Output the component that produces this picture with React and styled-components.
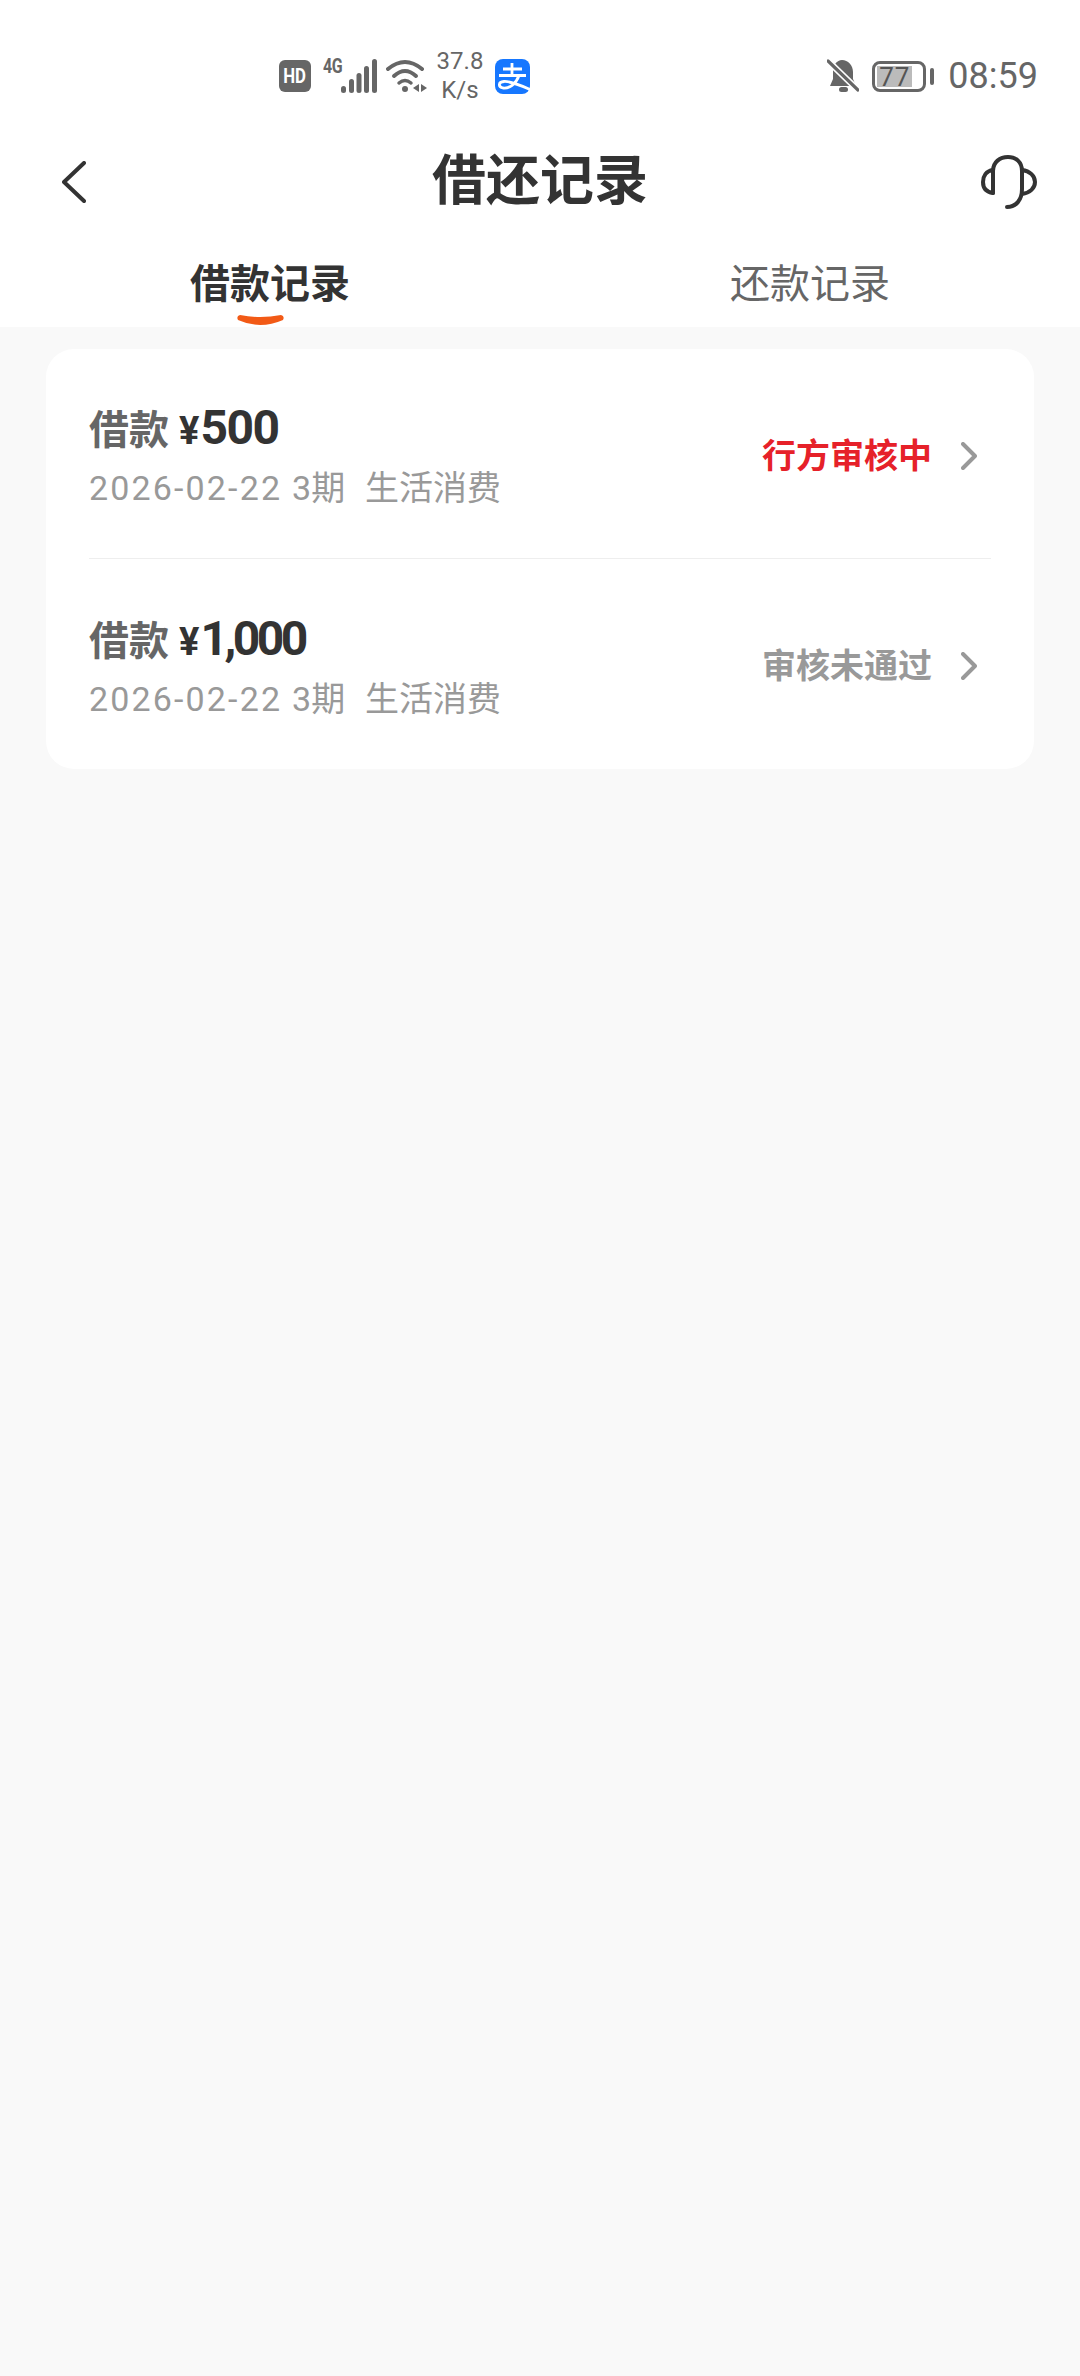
import React from 'react';
import styled, { createGlobalStyle } from 'styled-components';

const GlobalStyle = createGlobalStyle`
  html, body {
    margin: 0;
    padding: 0;
    background: #f9f9f9;
  }
  body {
    font-family: Roboto, "Noto Sans CJK SC", sans-serif;
  }
`;

const Page = styled.div`
  width: 1080px;
  height: 2376px;
  display: flex;
  flex-direction: column;
  overflow: hidden;
`;

const Header = styled.header`
  background: #fff;
`;

const StatusBar = styled.div`
  height: 152px;
  box-sizing: border-box;
  padding: 0 42px 0 279px;
  display: flex;
  align-items: center;
  justify-content: space-between;
  color: #666;
`;

const StatusGroup = styled.div`
  display: flex;
  align-items: center;
`;

const HdBadge = styled.div`
  width: 32px;
  height: 32px;
  border-radius: 6px;
  background: #666;
  color: #fff;
  font-size: 20px;
  font-weight: 700;
  display: flex;
  align-items: center;
  justify-content: center;
  span {
    display: block;
    transform: scaleX(0.84);
  }
`;

const SignalWrap = styled.div`
  margin-left: 12px;
  display: flex;
  align-items: flex-start;
  height: 34px;
`;

const NetType = styled.span`
  display: block;
  width: 18px;
  font-size: 20px;
  line-height: 15px;
  font-weight: 700;
  letter-spacing: -0.5px;
  transform: scaleX(0.8);
  transform-origin: left top;
`;

const Speed = styled.div`
  margin-left: 9px;
  width: 46px;
  text-align: center;
  font-size: 24px;
  line-height: 29px;
  white-space: nowrap;
  display: flex;
  flex-direction: column;
  align-items: center;
`;

const Battery = styled.div`
  margin-left: 13px;
  width: 54px;
  height: 31px;
  box-sizing: border-box;
  border: 3px solid #666;
  border-radius: 8px;
  padding: 2px;
  display: flex;
`;

const BatteryFill = styled.div`
  width: 35px;
  background: #bbb;
  font-size: 26px;
  line-height: 22px;
  color: #555;
  text-align: center;
  letter-spacing: 1px;
`;

const BatteryNub = styled.div`
  margin-left: 4px;
  width: 4px;
  height: 17px;
  border-radius: 2px;
  background: #666;
`;

const Clock = styled.div`
  margin-left: 14px;
  font-size: 36px;
  line-height: 40px;
`;

const NavBar = styled.div`
  height: 60px;
  padding: 0 43px;
  display: grid;
  grid-template-columns: 1fr auto 1fr;
  align-items: center;
`;

const NavLeft = styled.div`
  padding-left: 19px;
  display: flex;
`;

const NavTitle = styled.h1`
  margin: 0;
  font-size: 54px;
  line-height: 60px;
  font-weight: 700;
  color: #333;
`;

const NavRight = styled.div`
  display: flex;
  justify-content: flex-end;
`;

const Tabs = styled.div`
  height: 115px;
  display: flex;
`;

const Tab = styled.div`
  position: relative;
  flex: 1;
  padding-top: 49px;
  text-align: center;
  font-size: 40px;
  line-height: 48px;
  font-weight: ${(p) => (p.$active ? 700 : 400)};
  color: ${(p) => (p.$active ? '#333' : '#666')};
`;

const TabMark = styled.svg`
  position: absolute;
  left: 237px;
  bottom: 0;
  display: block;
`;

const Main = styled.main`
  flex: 1;
  background: #f9f9f9;
  padding: 22px 46px;
`;

const Card = styled.section`
  background: #fff;
  border-radius: 28px;
  padding: 0 43px;
`;

const Row = styled.div`
  height: 210px;
  box-sizing: border-box;
  padding-right: 14px;
  display: flex;
  align-items: center;
  justify-content: space-between;
  border-bottom: ${(p) => (p.$last ? 'none' : '1px solid #eeeeee')};
`;

const RowText = styled.div`
  padding-top: 3px;
  display: flex;
  flex-direction: column;
`;

const AmountLine = styled.div`
  display: flex;
  align-items: baseline;
  line-height: 56px;
  height: 56px;
`;

const AmountLabel = styled.span`
  font-size: 40px;
  font-weight: 700;
  color: #666;
`;

const Yen = styled.span`
  margin-left: 10px;
  font-size: 38px;
  font-weight: 700;
  color: #333;
`;

const Amount = styled.span`
  margin-left: 1px;
  font-size: 48px;
  font-weight: 700;
  letter-spacing: ${(p) => (p.$tight ? '-3.5px' : '-1.5px')};
  color: #333;
`;

const Meta = styled.div`
  margin-top: 10px;
  font-size: 34px;
  line-height: 44px;
  color: #999;
  white-space: pre;
  word-spacing: 1.5px;
`;

const MetaDate = styled.span`
  letter-spacing: 2.15px;
`;

const RowStatus = styled.div`
  padding-top: 4px;
  display: flex;
  align-items: center;
  gap: 29px;
`;

const StatusText = styled.span`
  font-size: 34px;
  line-height: 44px;
  font-weight: 700;
  color: ${(p) => (p.$alert ? '#e62129' : '#999')};
`;

const WifiIcon = () => (
  <svg width="42" height="36" viewBox="0 0 42 36" style={{ marginLeft: 9 }} fill="none" stroke="#666" strokeWidth="4" strokeLinecap="round">
    <path d="M2 11Q19 -3 36 11" />
    <path d="M8 18Q19 8 30 18" />
    <path d="M13 25Q19 20 25 25" strokeWidth="3.5" />
    <circle cx="19" cy="31" r="3" fill="#666" stroke="none" />
    <path d="M33 26V34L27 30Z M35 26V34L41 30Z" fill="#666" stroke="none" />
  </svg>
);

const SignalBars = () => (
  <svg width="36" height="34" viewBox="0 0 36 34" fill="#666">
    <rect x="0" y="27" width="5" height="7" rx="2.5" />
    <rect x="8" y="20" width="5" height="14" rx="2.5" />
    <rect x="15.5" y="14" width="5" height="20" rx="2.5" />
    <rect x="23" y="7" width="5" height="27" rx="2.5" />
    <rect x="31" y="0" width="5" height="34" rx="2.5" />
  </svg>
);

const AlipayIcon = () => (
  <svg width="35" height="35" viewBox="0 0 35 35" style={{ marginLeft: 12 }}>
    <rect width="35" height="35" rx="8" fill="#1677ff" />
    <path
      d="M8 10H27M17 4V16M4 16.5H31M24 16.5C21 25 14 30 8 29C3 28 3 23 9 22.5C16 22 27 27 35 30.5"
      fill="none"
      stroke="#fff"
      strokeWidth="2.8"
    />
  </svg>
);

const BellOffIcon = () => (
  <svg width="32" height="34" viewBox="0 0 32 34">
    <path d="M15 1C21 1 26 6 26 13V20L29 27H3L6 20V12C6 6 10 1 15 1Z" fill="#666" />
    <rect x="12" y="28" width="9" height="5" rx="2.5" fill="#666" />
    <path d="M1 2L31 31" stroke="#fff" strokeWidth="6.5" />
    <path d="M1 2L31 31" stroke="#666" strokeWidth="3.2" strokeLinecap="round" />
  </svg>
);

const BackIcon = () => (
  <svg width="24" height="42" viewBox="0 0 24 42" fill="none" stroke="#333" strokeWidth="4" strokeLinecap="round" strokeLinejoin="round">
    <path d="M22 2L2 21L22 40" />
  </svg>
);

const HeadsetIcon = () => (
  <svg width="56" height="55" viewBox="0 0 56 55" fill="none" stroke="#333" strokeWidth="4" strokeLinecap="round">
    <path d="M12 38V16C12 7 19 2 27 2C35 2 41 7 41 16V34C41 45 35 52 26 52" />
    <path d="M12 15C5 16 2 21 2 27C2 33 5 37 12 38" />
    <path d="M41 15C49 16 54 21 54 27C54 33 49 38 41 39" />
  </svg>
);

const ChevronIcon = () => (
  <svg width="16" height="28" viewBox="0 0 16 28" fill="none" stroke="#999" strokeWidth="4" strokeLinecap="round" strokeLinejoin="round">
    <path d="M2 2L14 14L2 26" />
  </svg>
);

const records = [
  { id: 1, amount: '500', status: '行方审核中', alert: true },
  { id: 2, amount: '1,000', status: '审核未通过', alert: false },
];

const App = () => {
  return (
    <Page>
      <GlobalStyle />
      <Header>
        <StatusBar>
          <StatusGroup>
            <HdBadge><span>HD</span></HdBadge>
            <SignalWrap>
              <NetType>4G</NetType>
              <SignalBars />
            </SignalWrap>
            <WifiIcon />
            <Speed>
              <span>37.8</span>
              <span>K/s</span>
            </Speed>
            <AlipayIcon />
          </StatusGroup>
          <StatusGroup>
            <BellOffIcon />
            <Battery>
              <BatteryFill>77</BatteryFill>
            </Battery>
            <BatteryNub />
            <Clock>08:59</Clock>
          </StatusGroup>
        </StatusBar>
        <NavBar>
          <NavLeft>
            <BackIcon />
          </NavLeft>
          <NavTitle>借还记录</NavTitle>
          <NavRight>
            <HeadsetIcon />
          </NavRight>
        </NavBar>
        <Tabs>
          <Tab $active>
            借款记录
            <TabMark width="47" height="13" viewBox="0 0 47 13">
              <path d="M3 1Q23 5 44 1Q48 2 46 6Q23 16 1 6Q-1 2 3 1Z" fill="#f25a16" />
            </TabMark>
          </Tab>
          <Tab>还款记录</Tab>
        </Tabs>
      </Header>
      <Main>
        <Card>
          {records.map((item, num) => (
            <Row key={item.id} $last={num === records.length - 1}>
              <RowText>
                <AmountLine>
                  <AmountLabel>借款</AmountLabel>
                  <Yen>¥</Yen>
                  <Amount $tight={item.amount.length > 3}>{item.amount}</Amount>
                </AmountLine>
                <Meta>
                  <MetaDate>2026-02-22</MetaDate>
                  {' 3期  生活消费'}
                </Meta>
              </RowText>
              <RowStatus>
                <StatusText $alert={item.alert}>{item.status}</StatusText>
                <ChevronIcon />
              </RowStatus>
            </Row>
          ))}
        </Card>
      </Main>
    </Page>
  );
};

export default App;
